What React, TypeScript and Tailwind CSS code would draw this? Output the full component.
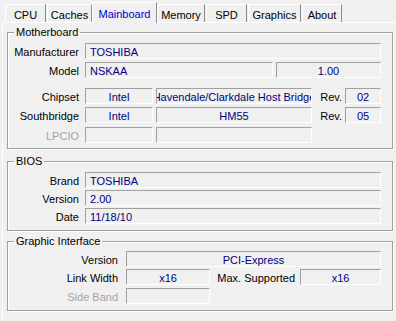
import React from "react";

type FieldProps = {
  value?: string;
  w: string;
  center?: boolean;
  className?: string;
};

function Field({ value = "", w, center, className = "" }: FieldProps) {
  return (
    <div
      className={`${w} ${className} h-[16px] shrink-0 overflow-hidden flex items-center whitespace-nowrap border-t border-l border-t-[#a0a0a0] border-l-[#a0a0a0] border-b border-r border-b-white border-r-white text-[#000080] leading-[14px] pt-px ${
        center ? "justify-center" : "pl-[4px]"
      }`}
    >
      <span className="shrink-0">{value}</span>
    </div>
  );
}

function Label({ text, w, muted, className = "" }: { text: string; w: string; muted?: boolean; className?: string }) {
  return (
    <div className={`${w} ${className} shrink-0 text-right leading-[16px] pt-px ${muted ? "text-[#a3a3a3]" : "text-black"}`}>
      {text}
    </div>
  );
}

function Group({ title, h, className = "", children }: { title: string; h: string; className?: string; children: React.ReactNode }) {
  return (
    <div
      className={`relative ${h} ${className} w-[386px] border border-[#a0a0a0] shadow-[inset_1px_1px_0_#ffffff,1px_1px_0_#ffffff]`}
    >
      <span className="absolute -top-[8px] left-[6px] px-[2px] bg-[#f0f0f0] leading-[14px] text-black">{title}</span>
      <div className="flex flex-col">{children}</div>
    </div>
  );
}

const tabs = [
  { name: "CPU", w: "w-[41px]", ml: "" },
  { name: "Caches", w: "w-[45px]", ml: "ml-px" },
  { name: "Mainboard", w: "w-[65px]", ml: "", active: true },
  { name: "Memory", w: "w-[48px]", ml: "" },
  { name: "SPD", w: "w-[41px]", ml: "ml-px" },
  { name: "Graphics", w: "w-[53px]", ml: "ml-px" },
  { name: "About", w: "w-[40px]", ml: "ml-px" },
];

export default function App() {
  return (
    <div
      className="w-[396px] h-[321px] overflow-hidden bg-[#f0f0f0] text-[11px] select-none"
      style={{ fontFamily: '"Liberation Sans", Arial, sans-serif' }}
    >
      {/* tab strip */}
      <div className="h-[22px] flex items-end pl-[5px]">
        {tabs.map((t) =>
          t.active ? (
            <div
              key={t.name}
              className={`${t.w} relative z-10 -mb-px h-[21px] bg-[#f0f0f0] border-t border-l border-white border-r border-r-[#8a8a8a] flex justify-center pt-[4px] leading-[14px] text-[#0000c8]`}
            >
              {t.name}
            </div>
          ) : (
            <div
              key={t.name}
              className={`${t.w} ${t.ml} h-[18px] border-t border-l border-white border-r border-r-[#8a8a8a] flex justify-center pt-[3px] leading-[14px] text-black`}
            >
              {t.name}
            </div>
          )
        )}
      </div>

      {/* panel */}
      <div className="ml-[2px] h-[299px] border-t border-l border-white pt-[9px] pl-[4px]">
        <Group title="Motherboard" h="h-[117px]">
          <div className="flex mt-[10px]">
            <Label text="Manufacturer" w="w-[71px]" />
            <Field value="TOSHIBA" w="w-[296px]" className="ml-[6px]" />
          </div>
          <div className="flex mt-[2px]">
            <Label text="Model" w="w-[71px]" />
            <Field value="NSKAA" w="w-[188px]" className="ml-[6px]" />
            <Field value="1.00" w="w-[105px]" className="ml-[3px]" center />
          </div>
          <div className="flex mt-[9px]">
            <Label text="Chipset" w="w-[71px]" />
            <Field value="Intel" w="w-[68px]" className="ml-[6px]" center />
            <Field value="Havendale/Clarkdale Host Bridge" w="w-[156px]" className="ml-[3px]" center />
            <Label text="Rev." w="w-[33px]" className="pr-[3px]" />
            <Field value="02" w="w-[36px]" center />
          </div>
          <div className="flex mt-[2px]">
            <Label text="Southbridge" w="w-[71px]" />
            <Field value="Intel" w="w-[68px]" className="ml-[6px]" center />
            <Field value="HM55" w="w-[156px]" className="ml-[3px]" center />
            <Label text="Rev." w="w-[33px]" className="pr-[3px]" />
            <Field value="05" w="w-[36px]" center />
          </div>
          <div className="flex mt-[3px]">
            <Label text="LPCIO" w="w-[71px]" muted />
            <Field w="w-[68px]" className="ml-[6px]" center />
            <Field w="w-[156px]" className="ml-[3px]" center />
          </div>
        </Group>

        <Group title="BIOS" h="h-[70px]" className="mt-[12px]">
          <div className="flex mt-[10px]">
            <Label text="Brand" w="w-[71px]" />
            <Field value="TOSHIBA" w="w-[296px]" className="ml-[6px]" />
          </div>
          <div className="flex mt-px">
            <Label text="Version" w="w-[71px]" />
            <Field value="2.00" w="w-[296px]" className="ml-[6px]" />
          </div>
          <div className="flex mt-px">
            <Label text="Date" w="w-[71px]" />
            <Field value="11/18/10" w="w-[296px]" className="ml-[6px]" />
          </div>
        </Group>

        <Group title="Graphic Interface" h="h-[70px]" className="mt-[10px]">
          <div className="flex mt-[9px]">
            <Label text="Version" w="w-[110px]" />
            <Field value="PCI-Express" w="w-[255px]" className="ml-[8px]" center />
          </div>
          <div className="flex mt-px">
            <Label text="Link Width" w="w-[110px]" />
            <Field value="x16" w="w-[84px]" className="ml-[8px]" center />
            <Label text="Max. Supported" w="w-[90px]" className="pr-[5px]" />
            <Field value="x16" w="w-[81px]" center />
          </div>
          <div className="flex mt-[2px]">
            <Label text="Side Band" w="w-[110px]" muted />
            <Field w="w-[84px]" className="ml-[8px]" />
          </div>
        </Group>
      </div>
    </div>
  );
}
